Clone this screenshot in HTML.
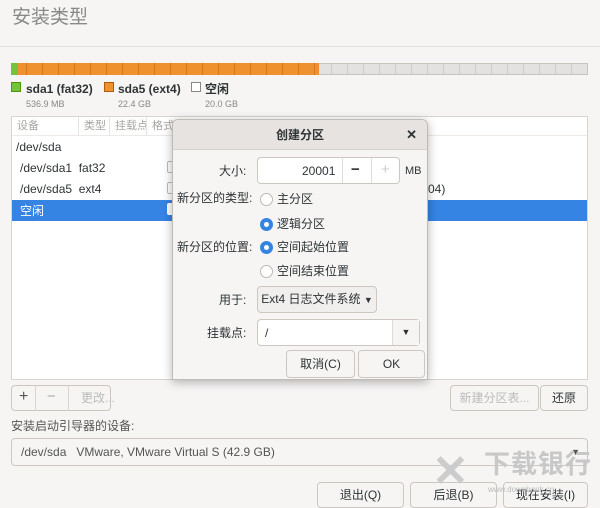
<!DOCTYPE html><html><head><meta charset="utf-8"><style>
*{box-sizing:border-box;margin:0;padding:0}
body{width:600px;height:500px;overflow:hidden;background:#f6f5f4;font-family:"Liberation Sans","Noto Sans CJK SC",sans-serif;font-size:12px;line-height:14px;color:#2e3436;position:relative}
.a{position:absolute;white-space:nowrap}
.btn{position:absolute;border:1px solid #cdc7c2;border-radius:4px;background:#f6f5f4;text-align:center;font-size:12px}
.radio{position:absolute;width:13px;height:13px;border-radius:50%;border:1px solid #bdb8b3;background:#fff}
.radio.on{border:4px solid #3584e4}
</style></head><body>
<div class="a" style="left:12px;top:7px;font-size:19px;line-height:22px;color:#888a85">安装类型</div>
<div class="a" style="left:0;top:46px;width:600px;height:1px;background:#e2dfdc"></div>
<div class="a" style="left:11px;top:63px;width:577px;height:12px;border:1px solid #c8c4c0;background:repeating-linear-gradient(90deg,#e4e2e0 0 15px,#cfcbc7 15px 16px)"></div>
<div class="a" style="left:11px;top:63px;width:308px;height:12px;background:repeating-linear-gradient(90deg,#f0912f 0 15px,#d27823 15px 16px)"></div>
<div class="a" style="left:11px;top:63px;width:7px;height:12px;background:#73c43a"></div>
<div class="a" style="left:11px;top:82px;width:10px;height:10px;background:#73c43a;border:1px solid #4e9a06"></div>
<div class="a" style="left:26px;top:82px;font-weight:bold">sda1 (fat32)</div>
<div class="a" style="left:26px;top:97px;font-size:9px;color:#888">536.9 MB</div>
<div class="a" style="left:104px;top:82px;width:10px;height:10px;background:#f0912f;border:1px solid #b05c10"></div>
<div class="a" style="left:118px;top:82px;font-weight:bold">sda5 (ext4)</div>
<div class="a" style="left:118px;top:97px;font-size:9px;color:#888">22.4 GB</div>
<div class="a" style="left:191px;top:82px;width:10px;height:10px;background:#fff;border:1px solid #888"></div>
<div class="a" style="left:205px;top:82px;font-weight:bold">空闲</div>
<div class="a" style="left:205px;top:97px;font-size:9px;color:#888">20.0 GB</div>
<div class="a" style="left:11px;top:116px;width:577px;height:264px;background:#fff;border:1px solid #d8d4d0"></div>
<div class="a" style="left:12px;top:117px;width:575px;height:19px;border-bottom:1px solid #ece9e6;color:#a8a6a3;font-size:11px;line-height:19px"><span style="position:absolute;left:5px">设备</span><span style="position:absolute;left:66px;border-left:1px solid #e6e3e0;padding-left:5px">类型</span><span style="position:absolute;left:97px;border-left:1px solid #e6e3e0;padding-left:5px">挂载点</span><span style="position:absolute;left:134px;border-left:1px solid #e6e3e0;padding-left:5px">格式</span></div>
<div class="a" style="left:16px;top:140px">/dev/sda</div>
<div class="a" style="left:20px;top:161px">/dev/sda1&nbsp; fat32</div>
<div class="a" style="left:20px;top:182px">/dev/sda5&nbsp; ext4</div>
<div class="a" style="left:167px;top:161px;width:8px;height:12px;border:1px solid #bbb;border-right:none;border-radius:2px 0 0 2px"></div>
<div class="a" style="left:167px;top:182px;width:8px;height:12px;border:1px solid #bbb;border-right:none;border-radius:2px 0 0 2px"></div>
<div class="a" style="left:428px;top:182px">04)</div>
<div class="a" style="left:12px;top:200px;width:575px;height:21px;background:#3584e4"></div>
<div class="a" style="left:20px;top:204px;color:#fff">空闲</div>
<div class="a" style="left:167px;top:203px;width:8px;height:12px;background:#fff;border-radius:2px 0 0 2px"></div>
<!-- bottom -->
<div class="btn" style="left:11px;top:385px;width:100px;height:26px"></div>
<div class="a" style="left:19px;top:390px;font-size:16px;color:#555">+</div>
<div class="a" style="left:35px;top:385px;width:1px;height:26px;background:#d8d4d0"></div>
<div class="a" style="left:47px;top:390px;font-size:15px;color:#aaa">−</div>
<div class="a" style="left:68px;top:385px;width:1px;height:26px;background:#d8d4d0"></div>
<div class="a" style="left:81px;top:391px;color:#bbb">更改...</div>
<div class="btn" style="left:450px;top:385px;width:89px;height:26px;line-height:24px;color:#bbb">新建分区表...</div>
<div class="btn" style="left:540px;top:385px;width:48px;height:26px;line-height:24px">还原</div>
<div class="a" style="left:11px;top:419px;color:#555">安装启动引导器的设备:</div>
<div class="btn" style="left:11px;top:438px;width:577px;height:28px;text-align:left;padding-left:9px;line-height:26px;color:#555">/dev/sda&nbsp;&nbsp; VMware, VMware Virtual S (42.9 GB)<span style="position:absolute;right:7px;font-size:9px">▼</span></div>
<div class="btn" style="left:317px;top:482px;width:87px;height:26px;line-height:24px">退出(Q)</div>
<div class="btn" style="left:410px;top:482px;width:87px;height:26px;line-height:24px">后退(B)</div>
<div class="btn" style="left:503px;top:482px;width:85px;height:26px;line-height:24px">现在安装(I)</div>
<div class="a" style="left:432px;top:450px;font-size:44px;line-height:44px;color:#ccc;font-weight:bold">✕</div>
<div class="a" style="left:484px;top:449px;font-size:26px;line-height:30px;color:#c8c8c8;font-weight:bold;letter-spacing:1px">下载银行</div>
<div class="a" style="left:488px;top:483px;font-size:8px;color:#bbb">www.downbank.cn</div>
<!-- dialog -->
<div class="a" style="left:172px;top:119px;width:256px;height:261px;background:#f6f5f4;border:1px solid #c0bbb6;border-radius:6px 6px 0 0;box-shadow:0 2px 10px rgba(0,0,0,.3);overflow:hidden">
<div style="height:30px;background:#e6e3e0;border-bottom:1px solid #d3cfcb;text-align:center;line-height:30px;font-weight:bold">创建分区<span style="position:absolute;right:10px;font-size:13px">✕</span></div>
</div>
<div class="a" style="left:219px;top:164px">大小:</div>
<div class="a" style="left:257px;top:157px;width:143px;height:27px;background:#fff;border:1px solid #cdc7c2;border-radius:4px"></div>
<div class="a" style="left:302px;top:164px">20001</div>
<div class="a" style="left:342px;top:158px;width:1px;height:25px;background:#e0ddd9"></div>
<div class="a" style="left:371px;top:158px;width:1px;height:25px;background:#e0ddd9"></div>
<div class="a" style="left:351px;top:163px;font-size:15px;font-weight:bold">−</div>
<div class="a" style="left:381px;top:163px;font-size:15px;color:#ccc">+</div>
<div class="a" style="left:405px;top:164px;font-size:11px">MB</div>
<div class="a" style="left:177px;top:191px">新分区的类型:</div>
<div class="radio" style="left:260px;top:193px"></div><div class="a" style="left:277px;top:192px">主分区</div>
<div class="radio on" style="left:260px;top:218px"></div><div class="a" style="left:277px;top:217px">逻辑分区</div>
<div class="a" style="left:177px;top:240px">新分区的位置:</div>
<div class="radio on" style="left:260px;top:241px"></div><div class="a" style="left:277px;top:240px">空间起始位置</div>
<div class="radio" style="left:260px;top:265px"></div><div class="a" style="left:277px;top:264px">空间结束位置</div>
<div class="a" style="left:219px;top:293px">用于:</div>
<div class="btn" style="left:257px;top:286px;width:120px;height:27px;line-height:25px;background:#f1efed">Ext4 日志文件系统 <span style="font-size:9px">▼</span></div>
<div class="a" style="left:207px;top:326px">挂载点:</div>
<div class="a" style="left:257px;top:319px;width:163px;height:27px;background:#fff;border:1px solid #cdc7c2;border-radius:4px"></div>
<div class="a" style="left:392px;top:320px;width:27px;height:25px;border-left:1px solid #ddd;background:#f6f5f4;text-align:center;line-height:25px;font-size:9px">▼</div>
<div class="a" style="left:265px;top:326px">/</div>
<div class="btn" style="left:286px;top:350px;width:69px;height:28px;line-height:26px">取消(C)</div>
<div class="btn" style="left:358px;top:350px;width:67px;height:28px;line-height:26px">OK</div>
</body></html>
